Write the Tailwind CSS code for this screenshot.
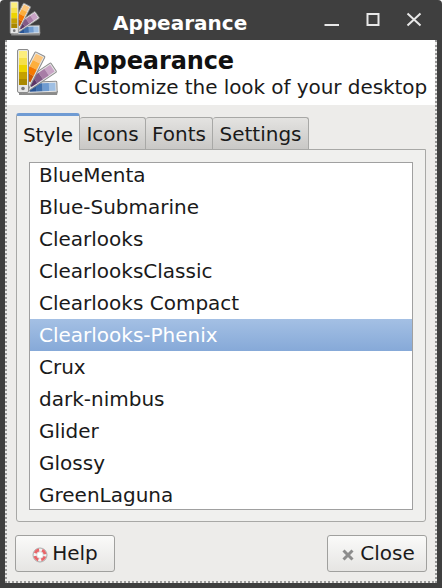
<!DOCTYPE html>
<html lang="en">
<head>
    <meta charset="UTF-8" />
    <meta name="viewport" content="width=device-width, initial-scale=1.0" />
    <script src="https://cdn.jsdelivr.net/npm/@tailwindcss/browser@4"></script>
    <title>Appearance</title>
</head>
<body class="bg-white overflow-hidden font-['DejaVu_Sans',sans-serif] text-[20px] text-[#1a1a1a]">
    <!-- palette icon, used in title bar and header -->
    <svg class="hidden">
        <symbol id="palette" viewBox="0 0 48 48">
            <path d="M3 44 L3 46 L41 46 L42 42 Z" fill="#8a8a8a" />
            <g transform="rotate(88 7 39)">
                <rect x="1.500" y="5" width="11" height="35" rx="1" fill="#e6e6e6" stroke="#8c8c8c" />
                <rect x="3" y="6.500" width="8" height="6.500" fill="#9fbfe3" />
                <rect x="3" y="13" width="8" height="6.500" fill="#6f9bd0" />
                <rect x="3" y="19.500" width="8" height="6.500" fill="#3f6fad" />
                <rect x="3" y="26" width="8" height="6.500" fill="#2a5595" />
            </g>
            <g transform="rotate(56 7 39)">
                <rect x="1.500" y="2" width="11" height="38" rx="1" fill="#e6e6e6" stroke="#8c8c8c" />
                <rect x="3" y="3.500" width="8" height="7" fill="#c9a4c6" />
                <rect x="3" y="10.500" width="8" height="7" fill="#a87ca6" />
                <rect x="3" y="17.500" width="8" height="7" fill="#825a86" />
                <rect x="3" y="24.500" width="8" height="7" fill="#5c3566" />
            </g>
            <g transform="rotate(27 7 39)">
                <rect x="1.500" y="1" width="11" height="39" rx="1" fill="#e6e6e6" stroke="#8c8c8c" />
                <rect x="3" y="2.500" width="8" height="7" fill="#fdc67c" />
                <rect x="3" y="9.500" width="8" height="7" fill="#fcaf3e" />
                <rect x="3" y="16.500" width="8" height="7" fill="#f57900" />
                <rect x="3" y="23.500" width="8" height="7" fill="#ce5c00" />
            </g>
            <rect x="1.500" y="0.500" width="11" height="43" rx="1.500" fill="#e6e6e6" stroke="#8c8c8c" />
            <rect x="3" y="2" width="8" height="7" fill="#fcee7c" />
            <rect x="3" y="9" width="8" height="7" fill="#f5e04a" />
            <rect x="3" y="16" width="8" height="7" fill="#edd400" />
            <rect x="3" y="23" width="8" height="7" fill="#c4a000" />
            <rect x="3" y="30" width="8" height="6" fill="#a98800" />
            <circle cx="7" cy="39.500" r="1.800" fill="#777" />
        </symbol>
    </svg>

    <div class="w-[442px] h-[588px] flex flex-col bg-[#3f3f3f] rounded-t-[4px] px-[5px] pb-[5px]">
        <!-- title bar -->
        <div class="h-[40px] shrink-0 flex items-center">
            <svg class="w-[36px] h-[36px] ml-[4px] mt-[-2px]"><use href="#palette" /></svg>
            <div class="ml-[68px] text-white font-bold leading-none mt-[5px]">Appearance</div>
            <div class="ml-auto self-start mt-[12px] flex mr-[15px] gap-[25px]">
                <svg class="w-[16px] h-[16px]" viewBox="0 0 16 16"><path d="M0.500 13 H15" stroke="#e8e8e8" stroke-width="2" fill="none" /></svg>
                <svg class="w-[16px] h-[16px]" viewBox="0 0 16 16"><rect x="2.500" y="2" width="11" height="11" stroke="#e8e8e8" stroke-width="2" fill="none" /></svg>
                <svg class="w-[16px] h-[16px]" viewBox="0 0 16 16"><path d="M1.500 1.500 L14.500 13.500 M14.500 1.500 L1.500 13.500" stroke="#e8e8e8" stroke-width="2" fill="none" /></svg>
            </div>
        </div>

        <!-- window body -->
        <div class="flex-1 flex flex-col border-x-2 border-b-2 border-dotted border-[#9a9a9a] bg-[#edecea] overflow-hidden">
            <div class="h-[65px] shrink-0 bg-white flex items-center pl-[9px]">
                <svg class="w-[48px] h-[48px] shrink-0"><use href="#palette" /></svg>
                <div class="ml-[10px]">
                    <div class="font-bold text-[24px] leading-[28px] text-[#111] tracking-[-0.1px]">Appearance</div>
                    <div class="leading-[24px] whitespace-nowrap tracking-[-0.06px]">Customize the look of your desktop</div>
                </div>
            </div>

            <div class="flex-1 flex flex-col pl-[9px] pr-[8px] pt-[8px] min-h-0">
                <!-- tabs -->
                <div class="flex h-[36px] shrink-0 leading-none">
                    <div class="w-[64px] h-[37px] relative z-10 bg-[#f0f0ee] border-x border-[#a8a8a6] border-t-[3px] border-t-[#6f9bd3] rounded-t-[3px] pt-[9px] text-center">Style</div>
                    <div class="w-[66px] h-[32px] mt-[4px] bg-linear-to-b from-[#e4e3e1] to-[#c9c8c6] border-r border-t border-[#a8a8a6] rounded-t-[3px] pt-[6px] text-center">Icons</div>
                    <div class="w-[67px] h-[32px] mt-[4px] bg-linear-to-b from-[#e4e3e1] to-[#c9c8c6] border-r border-t border-[#a8a8a6] rounded-t-[3px] pt-[6px] text-center">Fonts</div>
                    <div class="w-[96px] h-[32px] mt-[4px] bg-linear-to-b from-[#e4e3e1] to-[#c9c8c6] border-r border-t border-[#a8a8a6] rounded-t-[3px] pt-[6px] text-center">Settings</div>
                </div>

                <!-- notebook page -->
                <div class="h-[373px] shrink-0 mr-[1px] bg-[#f0f0ee] border border-[#a8a8a6] rounded-b-[3px] px-[12px] pt-[12px]">
                    <div class="h-[348px] bg-white border border-[#a0a0a0] overflow-hidden">
                        <ul class="mt-[-4px] leading-[32px]">
                            <li class="h-[32px] pl-[9px]">BlueMenta</li>
                            <li class="h-[32px] pl-[9px]">Blue-Submarine</li>
                            <li class="h-[32px] pl-[9px]">Clearlooks</li>
                            <li class="h-[32px] pl-[9px]">ClearlooksClassic</li>
                            <li class="h-[32px] pl-[9px]">Clearlooks Compact</li>
                            <li class="h-[32px] pl-[9px] text-white bg-linear-to-b from-[#a4c0e4] to-[#86a9d8]">Clearlooks-Phenix</li>
                            <li class="h-[32px] pl-[9px]">Crux</li>
                            <li class="h-[32px] pl-[9px]">dark-nimbus</li>
                            <li class="h-[32px] pl-[9px]">Glider</li>
                            <li class="h-[32px] pl-[9px]">Glossy</li>
                            <li class="h-[32px] pl-[9px]">GreenLaguna</li>
                        </ul>
                    </div>
                </div>

                <!-- buttons -->
                <div class="flex justify-between mt-[13px] ml-[-1px]">
                    <button class="w-[100px] h-[37px] flex items-center justify-center gap-[4px] border border-[#a0a09e] rounded-[3px] bg-linear-to-b from-[#fafaf9] to-[#e6e5e3]">
                        <svg class="w-[16px] h-[16px] mt-[2px]" viewBox="0 0 16 16">
                            <circle cx="8" cy="8" r="7" fill="#f2f2f2" stroke="#aaa" stroke-width="1" />
                            <circle cx="8" cy="8" r="5" fill="none" stroke="#e8666a" stroke-width="3" stroke-dasharray="4.850 3" stroke-dashoffset="-1.500" />
                            <circle cx="8" cy="8" r="3.300" fill="#fff" stroke="#c4c4c4" stroke-width="0.600" />
                        </svg>
                        <span class="mt-[-2px]">Help</span>
                    </button>
                    <button class="w-[100px] h-[37px] flex items-center justify-center gap-[6px] pl-[3px] border border-[#a0a09e] rounded-[3px] bg-linear-to-b from-[#fafaf9] to-[#e6e5e3]">
                        <svg class="w-[12px] h-[12px] mt-[3px]" viewBox="0 0 12 12"><path d="M1.500 1.500 L10.500 10.500 M10.500 1.500 L1.500 10.500" stroke="#8c8c8c" stroke-width="3" /></svg>
                        <span class="mt-[-2px]">Close</span>
                    </button>
                </div>
            </div>
        </div>
    </div>
</body>
</html>
